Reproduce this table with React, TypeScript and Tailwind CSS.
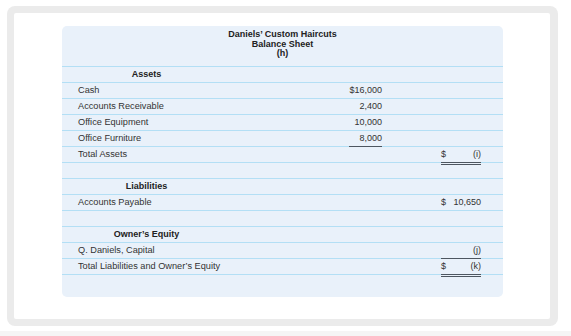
import React from "react";

type Line = "blue" | "dark" | "double";

interface Row {
  label?: string;
  heading?: boolean;
  c1?: string;
  c1Line?: Line;
  c2?: React.ReactNode;
  c2Line?: Line;
}

const ROWS: Row[] = [
  { label: "Assets", heading: true },
  { label: "Cash", c1: "$16,000" },
  { label: "Accounts Receivable", c1: "2,400" },
  { label: "Office Equipment", c1: "10,000" },
  { label: "Office Furniture", c1: "8,000" },
  { label: "Total Assets", c1Line: "dark", c2: <Split left="$" right="(i)" /> },
  { c2Line: "double" },
  { label: "Liabilities", heading: true },
  { label: "Accounts Payable", c2: <Split left="$" right="10,650" /> },
  {},
  { label: "Owner’s Equity", heading: true },
  { label: "Q. Daniels, Capital", c2: <Split right="(j)" /> },
  { label: "Total Liabilities and Owner’s Equity", c2Line: "dark", c2: <Split left="$" right="(k)" /> },
];

function lineClass(line: Line = "blue") {
  if (line === "dark") return "border-t border-[#4d5660]";
  if (line === "double") return "border-t-[3px] border-double border-[#4d5660]";
  return "border-t border-[#b3dff5]";
}

function Split({ left, right }: { left?: string; right: string }) {
  return (
    <div className="flex w-full justify-between">
      <span>{left}</span>
      <span>{right}</span>
    </div>
  );
}

export default function App() {
  return (
    <div
      className="h-[336px] w-[571px] overflow-hidden bg-white pl-[7px] pt-[6px]"
      style={{ fontFamily: '"Liberation Sans", Arial, sans-serif' }}
    >
      <div className="h-[320px] w-[551px] rounded-[8px] bg-[#ebebeb] pb-[7px] pl-[7px] pr-[8px] pt-[7px]">
        <div className="h-[306px] w-[536px] rounded-[2px] bg-white pl-[48px] pt-[13px]">
          <div className="h-[271px] w-[441px] rounded-[5px] bg-[#e9f1fa] text-[9px] text-[#333]">
            <header className="h-[40px] pt-[4px] text-center font-bold leading-[9.5px] text-[#222]">
              <div>Daniels’ Custom Haircuts</div>
              <div>Balance Sheet</div>
              <div>(h)</div>
            </header>

            {ROWS.map((r, i) => (
              <div key={i} className="flex h-[16px]">
                <div className={`flex w-[287px] items-center ${lineClass()} ${r.heading ? "" : "pl-4 text-[9.2px]"}`}>
                  {r.heading ? (
                    <span className="w-[169px] text-center font-bold text-[#222]">{r.label}</span>
                  ) : (
                    r.label
                  )}
                </div>
                <div className={`flex w-[33px] items-center justify-end ${lineClass(r.c1Line)}`}>{r.c1}</div>
                <div className={`w-[59px] ${lineClass()}`} />
                <div className={`flex w-[40px] items-center ${lineClass(r.c2Line)}`}>{r.c2}</div>
                <div className={`flex-1 ${lineClass()}`} />
              </div>
            ))}

            <div className="flex h-[23px]">
              <div className={`w-[379px] ${lineClass()}`} />
              <div className={`w-[40px] ${lineClass("double")}`} />
              <div className={`flex-1 ${lineClass()}`} />
            </div>
          </div>
        </div>
      </div>
      <div className="-ml-[7px] mt-[5px] h-[5px] w-[571px] bg-[#f5f5f5]" />
    </div>
  );
}
